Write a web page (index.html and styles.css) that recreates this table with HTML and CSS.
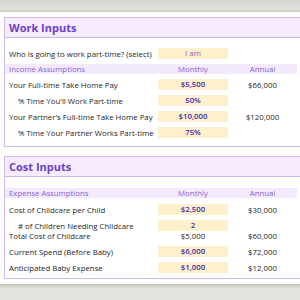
FILE: index.html
```html
<!DOCTYPE html>
<html>
<head>
<meta charset="utf-8">
<link rel="stylesheet" href="styles.css">
</head>
<body>
<div class="topbar"></div>
<div class="card card-work">
  <div class="card-head">Work Inputs</div>
  <div class="card-body">
    <div class="row first">
      <span class="label">Who is going to work part-time? (select)</span>
      <span class="input select">I am</span>
      <span class="annual"></span>
    </div>
    <div class="row band">
      <span class="label">Income Assumptions</span>
      <span class="colhead">Monthly</span>
      <span class="colhead">Annual</span>
    </div>
    <div class="row">
      <span class="label">Your Full-time Take Home Pay</span>
      <span class="input">$5,500</span>
      <span class="annual">$66,000</span>
    </div>
    <div class="row">
      <span class="label indent">% Time You'll Work Part-time</span>
      <span class="input">50%</span>
      <span class="annual"></span>
    </div>
    <div class="row">
      <span class="label">Your Partner's Full-time Take Home Pay</span>
      <span class="input">$10,000</span>
      <span class="annual">$120,000</span>
    </div>
    <div class="row">
      <span class="label indent">% Time Your Partner Works Part-time</span>
      <span class="input">75%</span>
      <span class="annual"></span>
    </div>
  </div>
</div>
<div class="card card-cost">
  <div class="card-head">Cost Inputs</div>
  <div class="card-body">
    <div class="row band">
      <span class="label">Expense Assumptions</span>
      <span class="colhead">Monthly</span>
      <span class="colhead">Annual</span>
    </div>
    <div class="row">
      <span class="label">Cost of Childcare per Child</span>
      <span class="input">$2,500</span>
      <span class="annual">$30,000</span>
    </div>
    <div class="row tight">
      <span class="label indent">&#35; of Children Needing Childcare</span>
      <span class="input">2</span>
      <span class="annual"></span>
    </div>
    <div class="row flush">
      <span class="label">Total Cost of Childcare</span>
      <span class="plain">$5,000</span>
      <span class="annual">$60,000</span>
    </div>
    <div class="row">
      <span class="label">Current Spend (Before Baby)</span>
      <span class="input">$6,000</span>
      <span class="annual">$72,000</span>
    </div>
    <div class="row">
      <span class="label">Anticipated Baby Expense</span>
      <span class="input">$1,000</span>
      <span class="annual">$12,000</span>
    </div>
  </div>
</div>
<div class="bottombar"></div>
</body>
</html>
```
FILE: styles.css
```css
html, body {
  margin: 0;
  padding: 0;
  background: #ffffff;
  overflow: hidden;
  width: 300px;
  height: 300px;
}
body {
  font-family: "Open Sans", "DejaVu Sans", sans-serif;
  font-size: 7.8px;
  color: #1e1e1e;
  display: flex;
  flex-direction: column;
}
.topbar {
  height: 12px;
  background: linear-gradient(#d6d4ce, #e4e2dc 70%, #cfccc6);
  flex: none;
}
.card {
  margin-left: 4px;
  width: 310px;
  border: 1px solid #cdb8f0;
  border-right: none;
  flex: none;
}
.card-work {
  margin-top: 5px;
}
.card-cost {
  margin-top: 9px;
}
.card-head {
  height: 19px;
  background: #f6ebff;
  border-bottom: 1px solid #cdb8f0;
  color: #6a40c6;
  font-weight: 700;
  font-size: 11px;
  line-height: 20px;
  padding-left: 4px;
}
.card-body {
  display: flex;
  flex-direction: column;
  gap: 5px;
  padding: 10px 0 8px 0;
  width: 292px;
}
.card-cost .card-body {
  padding-top: 11px;
  padding-bottom: 5px;
}
.row {
  display: grid;
  grid-template-columns: 153px 70px 69px;
  height: 11px;
  align-items: center;
  white-space: nowrap;
}
.card-cost .row.band + .row {
  margin-top: 1px;
}
.row.tight {
  margin-bottom: -5px;
}
.row.flush {
  height: 10px;
}
.label {
  padding-left: 4px;
  overflow: visible;
}
.label.indent {
  padding-left: 13px;
}
.row.band {
  background: #f3ebfd;
  height: 10px;
  color: #8c5ed8;
}
.colhead {
  text-align: center;
}
.input {
  background: #fdf0cb;
  height: 11px;
  line-height: 11px;
  text-align: center;
  color: #3c2cb4;
  font-weight: 600;
}
.input.select {
  color: #8a62cc;
  font-weight: 400;
}
.plain {
  text-align: center;
}
.annual {
  text-align: center;
}
.bottombar {
  margin-top: 5px;
  flex: 1;
  background: linear-gradient(#c9c6c0, #e4e2dd 30%, #e6e4e0);
}
```
